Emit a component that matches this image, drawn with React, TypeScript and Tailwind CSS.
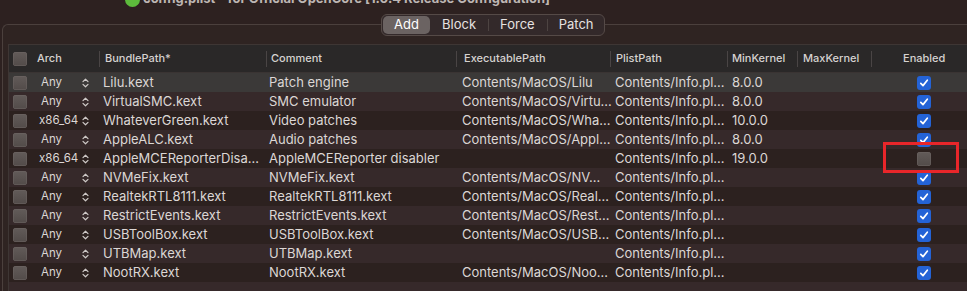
import React from 'react'

type Kext = {
  arch: 'Any' | 'x86_64'
  bundle: string
  comment: string
  exec: string
  plist: string
  minKernel: string
  enabled: boolean
}

const kexts: Kext[] = [
  { arch: 'Any', bundle: 'Lilu.kext', comment: 'Patch engine', exec: 'Contents/MacOS/Lilu', plist: 'Contents/Info.pl…', minKernel: '8.0.0', enabled: true },
  { arch: 'Any', bundle: 'VirtualSMC.kext', comment: 'SMC emulator', exec: 'Contents/MacOS/Virtu…', plist: 'Contents/Info.pl…', minKernel: '8.0.0', enabled: true },
  { arch: 'x86_64', bundle: 'WhateverGreen.kext', comment: 'Video patches', exec: 'Contents/MacOS/Wha…', plist: 'Contents/Info.pl…', minKernel: '10.0.0', enabled: true },
  { arch: 'Any', bundle: 'AppleALC.kext', comment: 'Audio patches', exec: 'Contents/MacOS/Appl…', plist: 'Contents/Info.pl…', minKernel: '8.0.0', enabled: true },
  { arch: 'x86_64', bundle: 'AppleMCEReporterDisa…', comment: 'AppleMCEReporter disabler', exec: '', plist: 'Contents/Info.pl…', minKernel: '19.0.0', enabled: false },
  { arch: 'Any', bundle: 'NVMeFix.kext', comment: 'NVMeFix.kext', exec: 'Contents/MacOS/NV…', plist: 'Contents/Info.pl…', minKernel: '', enabled: true },
  { arch: 'Any', bundle: 'RealtekRTL8111.kext', comment: 'RealtekRTL8111.kext', exec: 'Contents/MacOS/Real…', plist: 'Contents/Info.pl…', minKernel: '', enabled: true },
  { arch: 'Any', bundle: 'RestrictEvents.kext', comment: 'RestrictEvents.kext', exec: 'Contents/MacOS/Rest…', plist: 'Contents/Info.pl…', minKernel: '', enabled: true },
  { arch: 'Any', bundle: 'USBToolBox.kext', comment: 'USBToolBox.kext', exec: 'Contents/MacOS/USB…', plist: 'Contents/Info.pl…', minKernel: '', enabled: true },
  { arch: 'Any', bundle: 'UTBMap.kext', comment: 'UTBMap.kext', exec: '', plist: 'Contents/Info.pl…', minKernel: '', enabled: true },
  { arch: 'Any', bundle: 'NootRX.kext', comment: 'NootRX.kext', exec: 'Contents/MacOS/Noo…', plist: 'Contents/Info.pl…', minKernel: '', enabled: true },
]

const cols = 'grid grid-cols-[22px_68px_167px_190px_154px_117px_70px_74px_106px]'

const GrayBox = () => (
  <div className="w-[14px] h-[14px] rounded-[3px] bg-gradient-to-b from-[#625b59] to-[#524b49] shadow-[inset_0_0_0_0.5px_#6e6664]" />
)

const BlueBox = () => (
  <div className="w-[14px] h-[14px] rounded-[3px] bg-[#2463d6] flex items-center justify-center">
    <svg width="10" height="10" viewBox="0 0 10 10">
      <path d="M1.8 5.3 L4 7.6 L8.3 2.2" fill="none" stroke="#fff" strokeWidth="1.7" strokeLinecap="round" strokeLinejoin="round" />
    </svg>
  </div>
)

const UpDown = () => (
  <svg width="7" height="10" viewBox="0 0 7 10">
    <path d="M1 3.6 L3.5 1.2 L6 3.6 M1 6.4 L3.5 8.8 L6 6.4" fill="none" stroke="#cfcac8" strokeWidth="1.2" strokeLinecap="round" strokeLinejoin="round" />
  </svg>
)

const Sep = () => <div className="w-px h-[16px] bg-[#4a4545]" />

const App: React.FC = () => {
  return (
    <div
      className="relative w-[967px] h-[291px] overflow-hidden bg-[#2d2120] text-[#dcd7d5] flex flex-col"
      style={{ fontFamily: 'Inter, "Noto Sans", sans-serif' }}
    >
      {/* window title, cut off at the top */}
      <div className="h-[14px] -mt-[8px] flex items-center pl-[125px] gap-[3px] shrink-0">
        <div className="w-[15px] h-[15px] rounded-full bg-[#5dbb3c]" />
        <span className="text-[13px] font-bold text-[#bdb6b3] whitespace-nowrap">
          config.plist - for Official OpenCore [1.0.4 Release Configuration]
        </span>
      </div>

      {/* group box */}
      <div className="ml-[2px] mt-[18px] w-[975px] grow border-t border-l border-[#4b403d] rounded-tl-[6px] bg-[#2f2422] flex flex-col">
        <div className="-mt-[11px] ml-[378px] self-start flex items-center h-[22px] rounded-[6px] border border-[#554a47] bg-[#33292a] text-[13px] text-[#e6e2e0]">
          <div className="h-[18px] w-[47px] ml-px flex items-center justify-center rounded-[5px] bg-[#6b6362] text-white">Add</div>
          <div className="px-[12px]">Block</div>
          <div className="w-px h-[12px] bg-[#4d4442]" />
          <div className="pl-[11px] pr-[12px]">Force</div>
          <div className="w-px h-[12px] bg-[#4d4442]" />
          <div className="pl-[11px] pr-[10px]">Patch</div>
        </div>

        {/* table */}
        <div className="ml-[5px] mt-[8px] grow flex flex-col border-l border-t border-[#3e3634] bg-[#2e2321]">
          <div className={`${cols} h-[28px] items-center bg-[#2a2828] text-[11px] font-medium text-[#d6d2d0] border-b border-[#3a3433]`}>
            <div className="pl-[4px]"><GrayBox /></div>
            <div className="pl-[6px]">Arch</div>
            <div className="flex items-center gap-[5px]"><Sep /><span>BundlePath*</span></div>
            <div className="flex items-center gap-[4px]"><Sep /><span>Comment</span></div>
            <div className="flex items-center gap-[7px]"><Sep /><span>ExecutablePath</span></div>
            <div className="flex items-center gap-[5px]"><Sep /><span>PlistPath</span></div>
            <div className="flex items-center gap-[4px]"><Sep /><span>MinKernel</span></div>
            <div className="flex items-center gap-[5px]"><Sep /><span>MaxKernel</span></div>
            <div className="flex items-center"><Sep /><span className="pl-[31px]">Enabled</span></div>
          </div>

          {kexts.map((k, i) => (
            <div
              key={k.bundle}
              className={`${cols} h-[19px] items-center text-[13px] whitespace-nowrap ${
                i === 0 ? 'bg-[#3b3938]' : i % 2 === 1 ? 'bg-[#36292a]' : 'bg-[#2c211f]'
              }`}
            >
              <div className="pl-[4px]"><GrayBox /></div>
              <div className="flex items-center">
                <span className={`text-[11.5px] w-[51px] ${k.arch === 'Any' ? 'pl-[10px]' : 'pl-[8px]'}`}>{k.arch}</span>
                <UpDown />
              </div>
              <div className="pl-[4px]">{k.bundle}</div>
              <div className="pl-[3px]">{k.comment}</div>
              <div className="pl-[6px]">{k.exec}</div>
              <div className="pl-[5px]">{k.plist}</div>
              <div className="pl-[5px]">{k.minKernel}</div>
              <div />
              <div className="pl-[46px]">{k.enabled ? <BlueBox /> : <GrayBox />}</div>
            </div>
          ))}
          <div className="h-[19px] bg-[#36292a]" />
        </div>
      </div>

      {/* red annotation box */}
      <div className="absolute left-[883px] top-[142px] w-[76px] h-[31px] border-[3px] border-[#e8262a]" />
    </div>
  )
}

export default App
